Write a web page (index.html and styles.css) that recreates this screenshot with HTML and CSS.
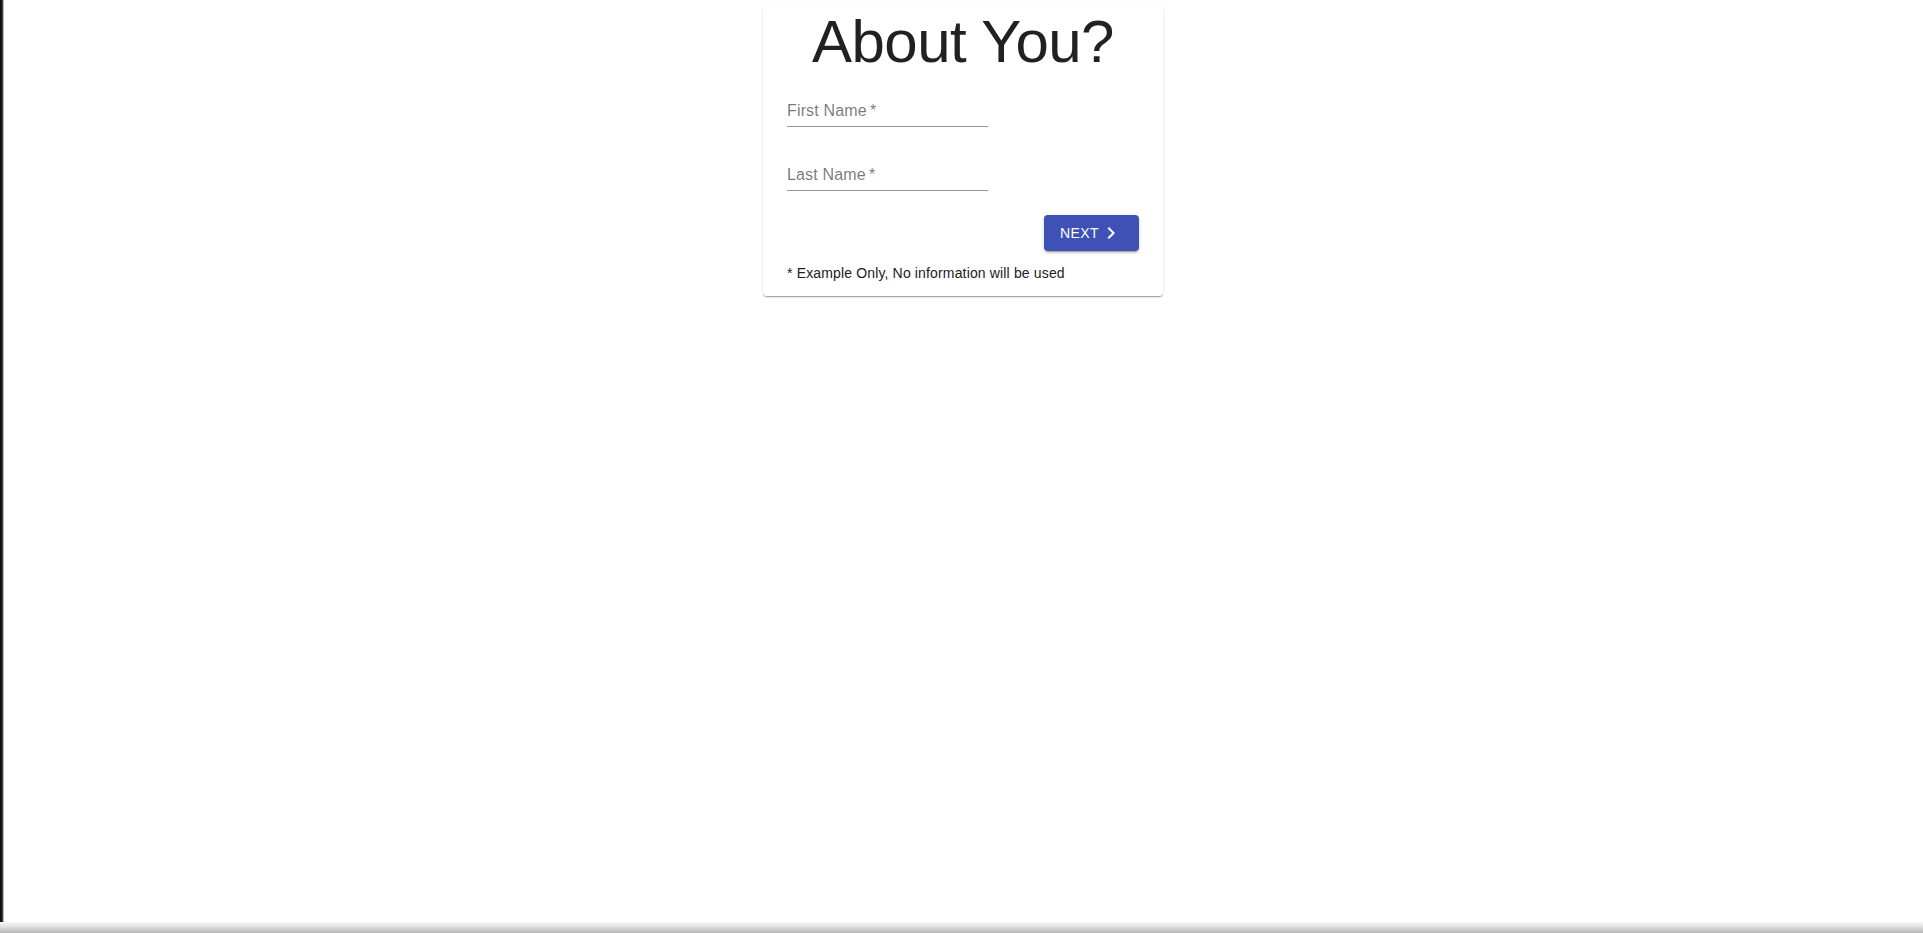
FILE: index.html
```html
<!DOCTYPE html>
<html lang="en">
<head>
<meta charset="utf-8">
<title>About You?</title>
<link rel="stylesheet" href="styles.css">
</head>
<body>
<div class="page">
  <main class="main">
    <form class="card">
      <h2 class="title">About You?</h2>
      <div class="field">
        <label class="label">First Name<span class="req">&thinsp;*</span></label>
        <input class="input" type="text">
      </div>
      <div class="field">
        <label class="label">Last Name<span class="req">&thinsp;*</span></label>
        <input class="input" type="text">
      </div>
      <div class="actions">
        <button type="button" class="btn">Next<svg class="btn-icon" viewBox="0 0 24 24" width="24" height="24"><path d="M10 6L8.59 7.41 13.17 12l-4.58 4.59L10 18l6-6z" fill="currentColor"/></svg></button>
      </div>
      <p class="note">* Example Only, No information will be used</p>
    </form>
  </main>
  <div class="bottom-strip"></div>
</div>
</body>
</html>
```

FILE: styles.css
```css
html, body {
  margin: 0;
  padding: 0;
  height: 100%;
  background: #fff;
}
body {
  font-family: "Liberation Sans", Arial, sans-serif;
  color: rgba(0, 0, 0, 0.87);
}
.page {
  height: 100vh;
  display: flex;
  flex-direction: column;
  background: linear-gradient(to right, #0c0c0c 0, #1a1a1a 2px, #6a6a6a 3px, #fff 4px);
  box-sizing: border-box;
}
.main {
  flex: 1;
  display: flex;
  justify-content: center;
  align-items: flex-start;
  padding-top: 6px;
  padding-left: 3px;
}
.bottom-strip {
  height: 11px;
  background: linear-gradient(to bottom, #f7f7f7 0, #dcdcdc 50%, #b4b4b4 100%);
}
.card {
  width: 400px;
  box-sizing: border-box;
  background: #fff;
  border-radius: 4px;
  box-shadow: 0px 2px 1px -1px rgba(0,0,0,0.2), 0px 1px 1px 0px rgba(0,0,0,0.14), 0px 1px 3px 0px rgba(0,0,0,0.12);
  padding: 0 24px 13px;
  display: flex;
  flex-direction: column;
}
.title {
  margin: 0;
  font-size: 60px;
  font-weight: 400;
  line-height: 72px;
  letter-spacing: -0.5px;
  text-align: center;
  color: #212121;
}
.field {
  position: relative;
  width: 201px;
  height: 48px;
  margin-top: 1px;
  margin-bottom: 16px;
  border-bottom: 1px solid rgba(0, 0, 0, 0.42);
  box-sizing: border-box;
}
.field + .field {
  margin-top: 0;
  margin-bottom: 0;
}
.label {
  position: absolute;
  left: 0;
  top: 24px;
  font-size: 16px;
  line-height: 1;
  letter-spacing: 0.15px;
  color: rgba(0, 0, 0, 0.54);
}
.input {
  position: absolute;
  left: 0;
  right: 0;
  bottom: 0;
  height: 32px;
  border: 0;
  background: transparent;
  outline: none;
  font: inherit;
}
.actions {
  display: flex;
  justify-content: flex-end;
  margin-top: 24px;
}
.btn {
  display: inline-flex;
  align-items: center;
  height: 36px;
  padding: 0 16px;
  border: 0;
  border-radius: 4px;
  background: #3f51b5;
  color: #fff;
  font-family: "Liberation Sans", Arial, sans-serif;
  font-size: 14px;
  letter-spacing: 0.4px;
  text-transform: uppercase;
  box-shadow: 0px 3px 1px -2px rgba(0,0,0,0.2), 0px 2px 2px 0px rgba(0,0,0,0.14), 0px 1px 5px 0px rgba(0,0,0,0.12);
  cursor: pointer;
}
.btn-icon {
  display: block;
}
.note {
  margin: 12px 0 0;
  font-size: 14px;
  line-height: 20px;
  letter-spacing: 0.15px;
  color: #212121;
}
```
